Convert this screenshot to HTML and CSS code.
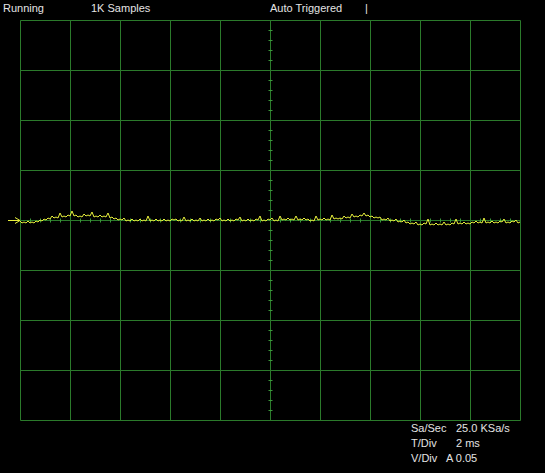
FILE: index.html
```html
<!DOCTYPE html>
<html>
<head>
<meta charset="utf-8">
<link rel="stylesheet" href="styles.css">
</head>
<body>
<div class="scope">
  <div class="status">
    <span class="s-run">Running</span>
    <span class="s-samples">1K Samples</span>
    <span class="s-trig">Auto Triggered</span>
    <span class="s-bar">|</span>
  </div>
  <svg class="screen" width="545" height="401" viewBox="0 0 545 401" xmlns="http://www.w3.org/2000/svg">
    <g stroke="#2b7a2b" stroke-width="1" fill="none">
      <path d="M20.5 0.5H520.5M20.5 50.5H520.5M20.5 100.5H520.5M20.5 150.5H520.5M20.5 200.5H520.5M20.5 250.5H520.5M20.5 300.5H520.5M20.5 350.5H520.5M20.5 400.5H520.5"/>
      <path d="M20.5 0.5V400.5M70.5 0.5V400.5M120.5 0.5V400.5M170.5 0.5V400.5M220.5 0.5V400.5M270.5 0.5V400.5M320.5 0.5V400.5M370.5 0.5V400.5M420.5 0.5V400.5M470.5 0.5V400.5M520.5 0.5V400.5"/>
    </g>
    <g stroke="#3a983a" stroke-width="1" fill="none">
      <path d="M268.5 10.5h4M268.5 20.5h4M268.5 30.5h4M268.5 40.5h4M268.5 60.5h4M268.5 70.5h4M268.5 80.5h4M268.5 90.5h4M268.5 110.5h4M268.5 120.5h4M268.5 130.5h4M268.5 140.5h4M268.5 160.5h4M268.5 170.5h4M268.5 180.5h4M268.5 190.5h4M268.5 210.5h4M268.5 220.5h4M268.5 230.5h4M268.5 240.5h4M268.5 260.5h4M268.5 270.5h4M268.5 280.5h4M268.5 290.5h4M268.5 310.5h4M268.5 320.5h4M268.5 330.5h4M268.5 340.5h4M268.5 360.5h4M268.5 370.5h4M268.5 380.5h4M268.5 390.5h4"/>
      <path d="M30.5 198.5v4M40.5 198.5v4M50.5 198.5v4M60.5 198.5v4M80.5 198.5v4M90.5 198.5v4M100.5 198.5v4M110.5 198.5v4M130.5 198.5v4M140.5 198.5v4M150.5 198.5v4M160.5 198.5v4M180.5 198.5v4M190.5 198.5v4M200.5 198.5v4M210.5 198.5v4M230.5 198.5v4M240.5 198.5v4M250.5 198.5v4M260.5 198.5v4M280.5 198.5v4M290.5 198.5v4M300.5 198.5v4M310.5 198.5v4M330.5 198.5v4M340.5 198.5v4M350.5 198.5v4M360.5 198.5v4M380.5 198.5v4M390.5 198.5v4M400.5 198.5v4M410.5 198.5v4M430.5 198.5v4M440.5 198.5v4M450.5 198.5v4M460.5 198.5v4M480.5 198.5v4M490.5 198.5v4M500.5 198.5v4M510.5 198.5v4"/>
    </g>
    <g stroke="#e8f03c" stroke-width="1" fill="none">
      <path d="M8 200.5H20M15 197.5L20 200.5L15 203.5"/>
      <polyline points="20,201 22,203 24,202 26,203 28,201 30,203 32,202 34,203 36,201 38,202 40,200 42,201 44,199 46,200 48,198 50,199 52,196 54,198 56,197 58,198 60,193 62,197 64,196 66,197 68,195 70,196 72,191 74,196 76,195 78,197 80,196 82,197 84,194 86,196 88,195 90,196 92,192 94,197 96,196 98,197 100,195 102,197 104,196 106,197 108,193 110,198 112,197 114,199 116,198 118,200 120,199 122,200 124,198 126,201 128,200 130,201 132,199 134,201 136,200 138,201 140,199 142,201 144,200 146,201 148,196 150,201 152,200 154,201 156,199 158,201 160,200 162,201 164,199 166,201 168,200 170,201 172,199 174,200 176,199 178,201 180,200 182,201 184,197 186,201 188,200 190,201 192,199 194,201 196,200 198,201 200,198 202,201 204,200 206,201 208,199 210,201 212,200 214,201 216,199 218,200 220,198 222,201 224,200 226,201 228,199 230,201 232,200 234,201 236,199 238,200 240,197 242,201 244,200 246,201 248,199 250,201 252,200 254,201 256,199 258,200 260,196 262,201 264,200 266,201 268,199 270,200 272,198 274,201 276,200 278,201 280,196 282,200 284,199 286,200 288,198 290,200 292,199 294,200 296,196 298,200 300,199 302,200 304,198 306,200 308,199 310,201 312,200 314,201 316,196 318,200 320,199 322,200 324,198 326,200 328,199 330,200 332,195 334,199 336,198 338,199 340,198 342,199 344,196 346,198 348,197 350,198 352,194 354,197 356,196 358,197 360,195 362,196 364,193 366,196 368,195 370,197 372,196 374,198 376,197 378,198 380,197 382,200 384,199 386,200 388,198 390,201 392,200 394,201 396,199 398,202 400,201 402,202 404,200 406,203 408,202 410,204 412,203 414,204 416,202 418,205 420,204 422,205 424,203 426,204 428,199 430,205 432,204 434,205 436,203 438,205 440,204 442,205 444,202 446,205 448,204 450,205 452,203 454,204 456,199 458,204 460,203 462,204 464,202 466,204 468,203 470,204 472,202 474,203 476,201 478,203 480,202 482,203 484,198 486,203 488,202 490,203 492,201 494,203 496,202 498,203 500,201 502,202 504,199 506,203 508,202 510,203 512,201 514,202 516,200 518,203 520,202"/>
    </g>
  </svg>
  <div class="readout">
    <div class="row"><span class="label">Sa/Sec</span><span class="value">25.0 KSa/s</span></div>
    <div class="row"><span class="label">T/Div</span><span class="value">2 ms</span></div>
    <div class="row"><span class="label short">V/Div</span><span class="value">A 0.05</span></div>
  </div>
</div>
</body>
</html>
```
FILE: styles.css
```css
html, body {
  margin: 0;
  padding: 0;
  background: #000;
}
.scope {
  width: 545px;
  height: 473px;
  overflow: hidden;
  background: #000;
  color: #e4e4e4;
  font-family: "Liberation Sans", Arial, sans-serif;
  font-size: 11px;
  line-height: 13px;
}
.status {
  height: 20px;
  box-sizing: border-box;
  padding-top: 2px;
  display: flex;
  white-space: nowrap;
}
.s-run { margin-left: 3px; width: 88px; }
.s-samples { width: 179px; }
.s-trig { width: 95px; }
.screen {
  display: block;
}
.readout {
  padding-left: 411px;
  line-height: 15px;
}
.row {
  display: flex;
  white-space: nowrap;
}
.label { width: 45px; }
.label.short { width: 35px; }
```
